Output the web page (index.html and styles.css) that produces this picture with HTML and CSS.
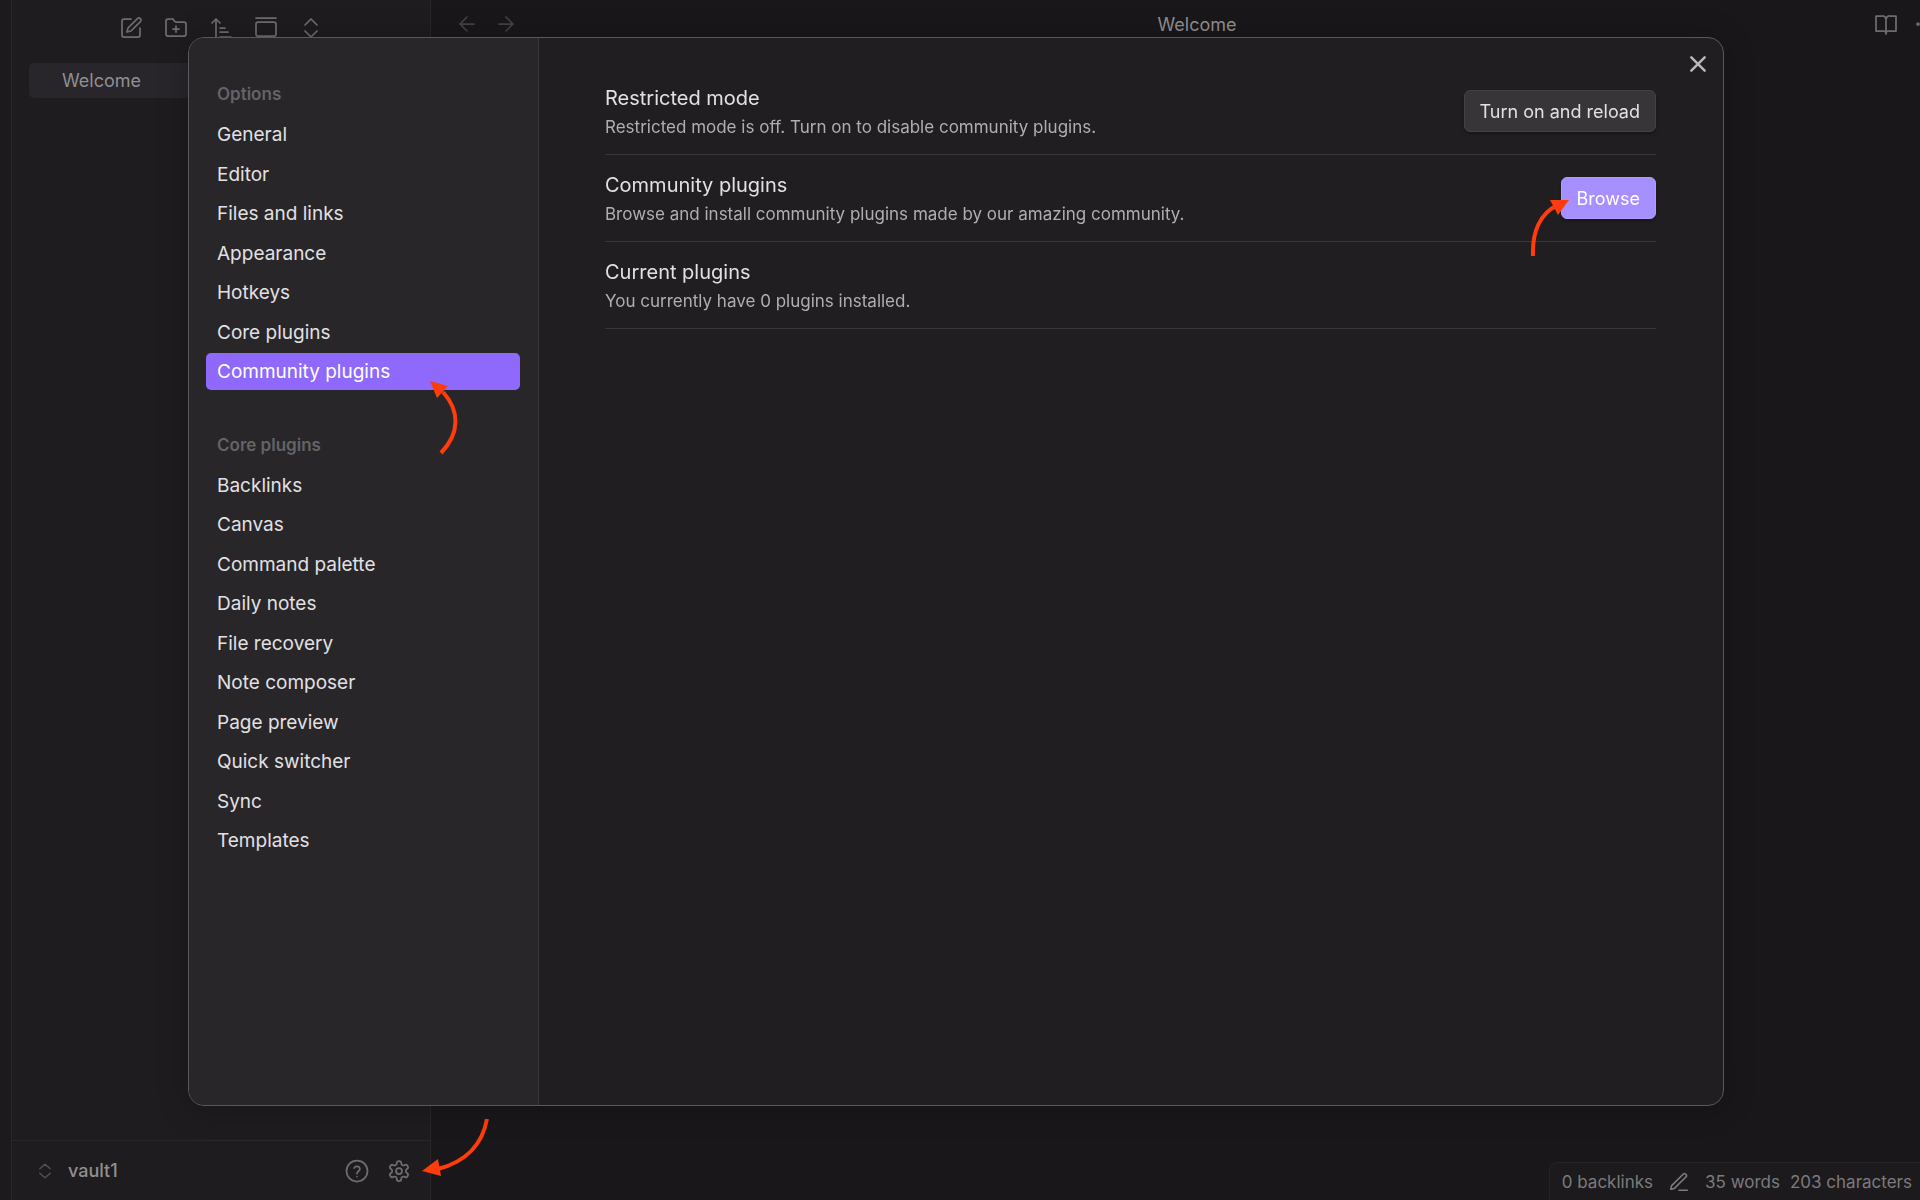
FILE: index.html
```
<!DOCTYPE html>
<html lang="en">
<head>
  <meta charset="UTF-8">
  <meta name="viewport" content="width=device-width, initial-scale=1.0">
  <title>Welcome - vault1</title>
  <link rel="stylesheet" href="styles.css">
</head>
<body>
  <div class="app">
    <div class="ribbon"></div>

    <!-- file explorer -->
    <aside class="explorer">
      <div class="explorer-tools">
        <button class="icon-button" aria-label="New note">
          <svg class="icon" viewBox="0 0 24 24"><path d="M12 3H5a2 2 0 0 0-2 2v14a2 2 0 0 0 2 2h14a2 2 0 0 0 2-2v-7"/><path d="M18.4 2.6a2.1 2.1 0 0 1 3 3L12 15l-4 1 1-4z"/></svg>
        </button>
        <button class="icon-button" aria-label="New folder">
          <svg class="icon" viewBox="0 0 24 24"><path d="M12 10v6M9 13h6"/><path d="M20 20a2 2 0 0 0 2-2V8a2 2 0 0 0-2-2h-7.900a2 2 0 0 1-1.700-.9L9.600 3.900A2 2 0 0 0 7.900 3H4a2 2 0 0 0-2 2v13a2 2 0 0 0 2 2z"/></svg>
        </button>
        <button class="icon-button" aria-label="Change sort order">
          <svg class="icon" viewBox="0 0 24 24"><path d="M3 7l4-4 4 4M7 3v18M11 12h5M11 16h8M11 21h11"/></svg>
        </button>
        <button class="icon-button" aria-label="Auto-reveal current file">
          <svg class="icon" viewBox="0 0 24 24"><path d="M2 2h20"/><rect x="2" y="6" width="20" height="14" rx="2"/></svg>
        </button>
        <button class="icon-button" aria-label="Collapse all">
          <svg class="icon" viewBox="0 0 24 24"><path d="M6 9l6-6 6 6M6 15l6 6 6-6"/></svg>
        </button>
      </div>
      <div class="file-list">
        <a class="file" href="#welcome">Welcome</a>
      </div>
      <div class="vault-bar">
        <button class="vault-switch">
          <svg class="icon icon-small" viewBox="0 0 24 24"><path d="M5 9l7-6 7 6M5 15l7 6 7-6"/></svg>
          vault1
        </button>
        <button class="icon-button" aria-label="Help">
          <svg class="icon" viewBox="0 0 24 24"><circle cx="12" cy="12" r="10.500"/><path d="M9.200 9a3 3 0 0 1 5.700 1c0 2-3 2.500-3 4.500M12 17.500v.1"/></svg>
        </button>
        <div class="pointed">
          <button class="icon-button" aria-label="Settings">
            <svg class="icon" viewBox="0 0 24 24"><path d="M12.220 2h-.44a2 2 0 0 0-2 2v.18a2 2 0 0 1-1 1.730l-.43.25a2 2 0 0 1-2 0l-.15-.08a2 2 0 0 0-2.730.73l-.22.38a2 2 0 0 0 .73 2.730l.15.1a2 2 0 0 1 1 1.720v.51a2 2 0 0 1-1 1.740l-.15.09a2 2 0 0 0-.73 2.730l.22.38a2 2 0 0 0 2.730.73l.15-.08a2 2 0 0 1 2 0l.43.25a2 2 0 0 1 1 1.730V20a2 2 0 0 0 2 2h.44a2 2 0 0 0 2-2v-.18a2 2 0 0 1 1-1.730l.43-.25a2 2 0 0 1 2 0l.15.08a2 2 0 0 0 2.730-.73l.22-.39a2 2 0 0 0-.73-2.730l-.15-.08a2 2 0 0 1-1-1.740v-.5a2 2 0 0 1 1-1.740l.15-.09a2 2 0 0 0 .73-2.730l-.22-.38a2 2 0 0 0-2.730-.73l-.15.08a2 2 0 0 1-2 0l-.43-.25a2 2 0 0 1-1-1.730V4a2 2 0 0 0-2-2z"/><circle cx="12" cy="12" r="3"/></svg>
          </button>
          <svg class="arrow arrow-settings" viewBox="0 0 70 60"><path class="arrow-line" d="M66 2C61 29 44 45 17 52"/><path class="arrow-head" d="M1 54L17 42L20 59Z"/></svg>
        </div>
      </div>
    </aside>

    <!-- note pane -->
    <main class="pane">
      <header class="pane-header">
        <div class="history">
          <button class="icon-button" aria-label="Back">
            <svg class="icon" viewBox="0 0 24 24"><path d="M12 19l-7-7 7-7M19 12H5"/></svg>
          </button>
          <button class="icon-button" aria-label="Forward">
            <svg class="icon" viewBox="0 0 24 24"><path d="M5 12h14M12 5l7 7-7 7"/></svg>
          </button>
        </div>
        <div class="pane-title">Welcome</div>
        <div class="pane-actions">
          <button class="icon-button" aria-label="Reading view">
            <svg class="icon" viewBox="0 0 24 24"><path d="M12 6v16M2 4h6a4 4 0 0 1 4 3a4 4 0 0 1 4-3h6v15h-7a3 3 0 0 0-3 2a3 3 0 0 0-3-2H2z"/></svg>
          </button>
          <button class="icon-button" aria-label="More options">
            <svg class="icon" viewBox="0 0 24 24"><circle cx="5" cy="12" r="1"/><circle cx="12" cy="12" r="1"/><circle cx="19" cy="12" r="1"/></svg>
          </button>
        </div>
      </header>
      <footer class="status-bar">
        <span>0 backlinks</span>
        <svg class="icon icon-pen" viewBox="0 0 24 24"><path d="M12 21h9"/><path d="M16.500 3.500a2.100 2.100 0 0 1 3 3L7 19l-4 1 1-4z"/></svg>
        <span class="word-count">35 words</span>
        <span>203 characters</span>
      </footer>
    </main>
  </div>

  <!-- settings -->
  <div class="overlay">
    <div class="modal" role="dialog" aria-label="Settings">
      <nav class="tabs">
        <h2 class="tabs-title">Options</h2>
        <div class="tab-list options-list">
          <a class="tab" href="#general">General</a>
          <a class="tab" href="#editor">Editor</a>
          <a class="tab" href="#files">Files and links</a>
          <a class="tab" href="#appearance">Appearance</a>
          <a class="tab" href="#hotkeys">Hotkeys</a>
          <a class="tab" href="#core">Core plugins</a>
          <div class="pointed">
            <a class="tab active" href="#community">Community plugins</a>
            <svg class="arrow arrow-tab" viewBox="0 0 30 76"><path class="arrow-line" d="M12 73C31 53 31 31 14 12"/><path class="arrow-head" d="M1 1L19 6L8 18Z"/></svg>
          </div>
        </div>
        <h2 class="tabs-title">Core plugins</h2>
        <div class="tab-list core-list">
          <a class="tab" href="#backlinks">Backlinks</a>
          <a class="tab" href="#canvas">Canvas</a>
          <a class="tab" href="#palette">Command palette</a>
          <a class="tab" href="#daily">Daily notes</a>
          <a class="tab" href="#recovery">File recovery</a>
          <a class="tab" href="#composer">Note composer</a>
          <a class="tab" href="#preview">Page preview</a>
          <a class="tab" href="#switcher">Quick switcher</a>
          <a class="tab" href="#sync">Sync</a>
          <a class="tab" href="#templates">Templates</a>
        </div>
      </nav>

      <section class="settings">
        <button class="close" aria-label="Close">
          <svg class="icon icon-close" viewBox="0 0 24 24"><path d="M4 4l16 16M20 4L4 20"/></svg>
        </button>
        <div class="setting">
          <div class="setting-info">
            <h3>Restricted mode</h3>
            <p>Restricted mode is off. Turn on to disable community plugins.</p>
          </div>
          <button class="button">Turn on and reload</button>
        </div>
        <div class="setting">
          <div class="setting-info">
            <h3>Community plugins</h3>
            <p>Browse and install community plugins made by our amazing community.</p>
          </div>
          <div class="pointed">
            <button class="button button-cta">Browse</button>
            <svg class="arrow arrow-browse" viewBox="0 0 40 60"><path class="arrow-line" d="M3 58C2 34 10 15 28 7"/><path class="arrow-head" d="M20 2L39 2L28 17Z"/></svg>
          </div>
        </div>
        <div class="setting">
          <div class="setting-info">
            <h3>Current plugins</h3>
            <p>You currently have 0 plugins installed.</p>
          </div>
        </div>
      </section>
    </div>
  </div>
</body>
</html>
```
FILE: styles.css
```
* {
  box-sizing: border-box;
}
body {
  margin: 0;
  background-color: #19171a;
  color: #e2e0e3;
  font-family: Inter, "Liberation Sans", sans-serif;
  font-size: 19px;
  overflow: hidden;
}
h2, h3, p {
  margin: 0;
}
a {
  color: inherit;
  text-decoration: none;
}
button {
  font-family: inherit;
  font-size: inherit;
  color: inherit;
  border: none;
  background: none;
  padding: 0;
  cursor: pointer;
}

/* icons */
.icon {
  display: block;
  width: 24px;
  height: 24px;
  fill: none;
  stroke: currentColor;
  stroke-width: 1.75;
  stroke-linecap: round;
  stroke-linejoin: round;
}
.icon-button {
  display: block;
  flex: none;
  color: #6e6c70;
}
.icon-small {
  width: 18px;
  height: 22px;
  color: #555357;
}

/* app behind the dialog */
.app {
  display: flex;
  height: 100vh;
}
.ribbon {
  width: 12px;
  background-color: #1c1a1d;
  border-right: 1px solid #29272a;
}
.explorer {
  display: flex;
  flex-direction: column;
  width: 419px;
  background-color: #1e1c1f;
  border-right: 1px solid #29272a;
}
.explorer-tools {
  display: flex;
  justify-content: center;
  gap: 21px;
  padding: 16px 0;
}
.file-list {
  flex: 1;
  padding: 7px 17px;
}
.file {
  display: block;
  padding-left: 33px;
  font-size: 18px;
  line-height: 35px;
  color: #918f92;
  background-color: #28262a;
  border-radius: 5px;
}
.vault-bar {
  display: flex;
  align-items: center;
  gap: 18px;
  height: 60px;
  padding: 0 19px 0 24px;
  border-top: 1px solid #29272a;
}
.vault-switch {
  display: flex;
  flex: 1;
  align-items: center;
  gap: 14px;
  font-size: 18px;
  font-weight: 500;
  color: #918f92;
}
.pane {
  display: flex;
  flex: 1;
  flex-direction: column;
  justify-content: space-between;
  min-width: 0;
}
.pane-header {
  display: flex;
  align-items: center;
  height: 48px;
  overflow: hidden;
}
.history {
  display: flex;
  gap: 15px;
  padding: 0 2px 0 24px;
}
.history .icon-button {
  color: #434144;
}
.pane-title {
  flex: 1;
  text-align: center;
  font-size: 18px;
  color: #918f92;
}
.pane-actions {
  display: flex;
  gap: 15px;
  width: 46px;
}
.status-bar {
  display: flex;
  align-self: flex-end;
  align-items: center;
  height: 38px;
  padding: 0 8px 0 12px;
  font-size: 17px;
  color: #7d7b7e;
  background-color: #1c1a1d;
  border: 1px solid #252326;
  border-width: 1px 0 0 1px;
  border-radius: 8px 0 0 0;
}
.icon-pen {
  width: 22px;
  margin: 0 15px;
}
.word-count {
  margin-right: 10px;
}

/* settings dialog */
.overlay {
  position: fixed;
  inset: 0;
  display: flex;
  padding: 37px 196px 94px 188px;
}
.modal {
  display: flex;
  flex: 1;
  overflow: hidden;
  background-color: #201e21;
  border: 1px solid #5a585c;
  border-radius: 16px;
  box-shadow: 0 2px 30px rgba(0, 0, 0, 0.25);
}
.tabs {
  width: 350px;
  padding: 42px 18px 42px 17px;
  background-color: #282629;
  border-right: 1px solid #39373a;
}
.tabs-title {
  padding: 0 11px;
  font-size: 17px;
  font-weight: 600;
  line-height: 28px;
  color: #656367;
}
.tab-list {
  display: flex;
  flex-direction: column;
  justify-content: space-between;
  margin: 8px 0 41px;
}
.options-list {
  min-height: 274px;
}
.core-list {
  min-height: 392px;
}
.tab {
  display: block;
  padding: 1px 11px 0;
  line-height: 36px;
  border-radius: 5px;
}
.tab.active {
  color: #fff;
  background-color: #8e69fb;
}
.settings {
  position: relative;
  flex: 1;
  padding: 30px 67px 30px 66px;
}
.close {
  position: absolute;
  top: 14px;
  right: 15px;
  color: #b9b7ba;
}
.icon-close {
  stroke-width: 3;
  width: 20px;
}
.setting {
  display: flex;
  align-items: center;
  justify-content: space-between;
  height: 87px;
  border-bottom: 1px solid #39373a;
}
.setting-info {
  padding-top: 2px;
}
.setting h3 {
  font-size: 20px;
  font-weight: 400;
  line-height: 30px;
}
.setting p {
  font-size: 17px;
  line-height: 28px;
  color: #b0aeb1;
}
.button {
  display: block;
  height: 42px;
  padding: 0 15px;
  font-size: 18px;
  background-color: #373538;
  border: 1px solid #434145;
  border-radius: 6px;
  box-shadow: 0 2px 3px rgba(0, 0, 0, 0.3);
}
.button-cta {
  color: #fff;
  background-color: #a68fff;
  border-color: #b09cff;
}

/* red pointer arrows */
.pointed {
  position: relative;
}
.arrow {
  position: absolute;
  pointer-events: none;
}
.arrow-line {
  fill: none;
  stroke: #ff3c0c;
  stroke-width: 4;
}
.arrow-head {
  fill: #ff3c0c;
}
.arrow-settings {
  left: 34px;
  bottom: 6px;
  width: 70px;
  height: 60px;
}
.arrow-tab {
  left: 223px;
  top: 27px;
  width: 30px;
  height: 76px;
}
.arrow-browse {
  left: -31px;
  top: 21px;
  width: 40px;
  height: 60px;
}
```
